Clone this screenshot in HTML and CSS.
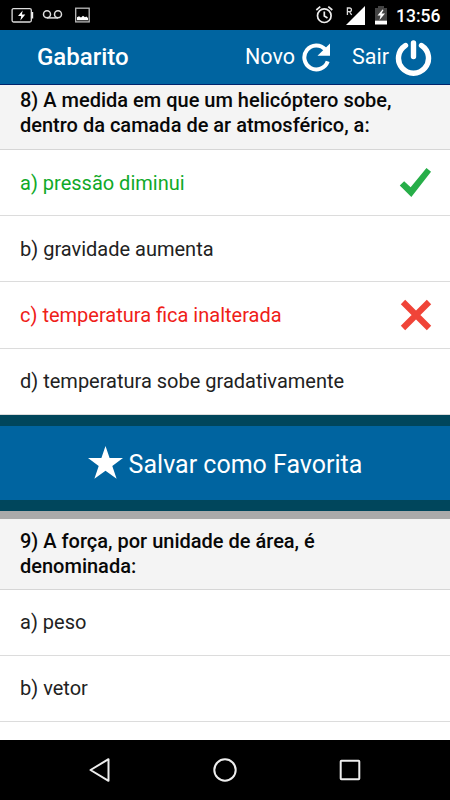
FILE: index.html
```html
<!DOCTYPE html>
<html lang="pt-BR">
<head>
<meta charset="utf-8">
<title>Gabarito</title>
<link rel="stylesheet" href="styles.css">
</head>
<body>
<div class="screen">
  <div class="status">
    <svg class="status-left" width="100" height="30" viewBox="0 0 100 30">
      <rect x="12.1" y="8.600" width="19.200" height="13.400" rx="1.500" fill="none" stroke="#ddd" stroke-width="1.300"/>
      <rect x="31.400" y="12" width="1.800" height="6.500" fill="#eee"/>
      <path d="M22.700 10.500L18 16h3.200l-.8 4.500L25.300 14.600h-3.400z" fill="#fff"/>
      <g fill="none" stroke="#ddd" stroke-width="1.500"><circle cx="47" cy="14.200" r="3.500"/><circle cx="58" cy="14.200" r="3.500"/><path d="M47 17.900h11"/></g>
      <rect x="75.700" y="8.200" width="13.500" height="13.700" fill="none" stroke="#bbb" stroke-width="1.300"/>
      <path d="M77 20.300v-3l2-1 2 1.200 2-1.800 2 1.500 1.300-.7 1.700 1.500v2.300z" fill="#fff"/>
    </svg>
    <svg class="status-right" width="80" height="30" viewBox="312 0 80 30">
      <g fill="none" stroke="#eee" stroke-width="1.700"><circle cx="324.300" cy="15.700" r="6.800"/><path d="M324.300 11.500v4.500l3.200 2M316.300 10l4-3.300M328.300 6.700l4 3.300"/></g>
      <path d="M365 6v19h-19z" fill="#fff"/>
      <path d="M347.400 15V8h2.200a1.800 1.800 0 0 1 0 3.700h-2.200m2.200 0l2 3.300" fill="none" stroke="#ddd" stroke-width="1.300"/>
      <path d="M378 6h6v2h3v12h-12V8h3z" fill="#444"/>
      <path d="M375 20.500h12v4h-12z" fill="#fff"/>
      <path d="M382.500 9.500l-5 6h3l-1 4.500 5.500-6.500h-3.500l2-3.500z" fill="#fff"/>
    </svg>
    <span class="clock">13:56</span>
  </div>
  <header class="header">
    <h1 class="title">Gabarito</h1>
    <span class="action action-new">Novo</span>
    <svg class="refresh" width="30" height="30" viewBox="0 0 30 30"><path d="M24.300 7.400A12 12 0 1 0 26.700 19.300" fill="none" stroke="#fff" stroke-width="4"/><path d="M29 1.500v12.200H16.500z" fill="#fff"/></svg>
    <span class="action action-exit">Sair</span>
    <svg class="power" width="37" height="37" viewBox="0 0 37 37"><path d="M10.500 6.500A15 15 0 1 0 26.500 6.500M18.500 4v13.500" fill="none" stroke="#fff" stroke-width="5.400" stroke-linecap="round"/></svg>
  </header>
  <main class="content">
    <h2 class="question question-first">8) A medida em que um helicóptero sobe,<br>dentro da camada de ar atmosférico, a:</h2>
    <div class="answer correct"><span>a) pressão diminui</span>
      <svg class="mark" width="33" height="32" viewBox="0 0 34 32"><path d="M0.800 18.500L5.300 14.300 12 20.500 28.300 0.500 33 4.300 12.700 30.500z" fill="#27ae49"/></svg>
    </div>
    <div class="answer"><span>b) gravidade aumenta</span></div>
    <div class="answer wrong"><span>c) temperatura fica inalterada</span>
      <svg class="mark" width="32" height="32" viewBox="0 0 32 32"><path d="M3 3L29 29M29 3L3 29" stroke="#f04438" stroke-width="6.200"/></svg>
    </div>
    <div class="answer answer-last"><span>d) temperatura sobe gradativamente</span></div>
    <div class="favorite">
      <svg width="35" height="33" viewBox="0 0 35 33"><path d="M17.500 0L21.600 12H35L24.300 20 28.600 32.800 17.500 24.800 6.400 32.800 10.700 20 0 12H13.400z" fill="#fff"/></svg>
      <span class="favorite-label">Salvar como Favorita</span>
    </div>
    <h2 class="question question-next">9) A força, por unidade de área, é<br>denominada:</h2>
    <div class="answer"><span>a) peso</span></div>
    <div class="answer"><span>b) vetor</span></div>
  </main>
  <nav class="nav">
    <svg width="22" height="26" viewBox="0 0 22 26"><path d="M19.500 2.200v21.600L1.500 13z" fill="none" stroke="#eee" stroke-width="2" stroke-linejoin="round"/></svg>
    <svg width="26" height="26" viewBox="0 0 26 26"><circle cx="13" cy="13" r="10.700" fill="none" stroke="#eee" stroke-width="2"/></svg>
    <svg width="22" height="26" viewBox="0 0 22 26"><rect x="1.700" y="3.700" width="18.600" height="18.600" rx=".7" fill="none" stroke="#eee" stroke-width="2"/></svg>
  </nav>
</div>
</body>
</html>
```
FILE: styles.css
```css
* { box-sizing: border-box; }
body { margin: 0; font-family: Roboto, sans-serif; background: #000; }
svg { display: block; flex: none; }
.screen { width: 450px; height: 800px; display: flex; flex-direction: column; overflow: hidden; }
.status { height: 30px; flex: none; display: flex; align-items: center; background: #000; color: #fff; }
.status-left { margin-right: 212px; }
.clock { margin-left: 4px; font-size: 17.5px; font-weight: 500; line-height: 30px; padding-top: 2px; }
.header { height: 55px; flex: none; display: flex; align-items: center; background: #0064a0; border-bottom: 1px solid #00246c; color: #fff; }
.title { margin: 0 0 0 37px; width: 208px; font-size: 24px; font-weight: 500; line-height: 54px; }
.action { font-size: 21.5px; line-height: 54px; white-space: nowrap; }
.action-new { width: 56px; }
.action-exit { width: 38px; margin-left: 21px; }
.power { margin-left: 5px; }
.content { flex: 1; min-height: 0; overflow: hidden; background: #fff; }
.question { margin: 0; padding-left: 20px; background: #f4f4f4; border-bottom: 1px solid #d6d6d6; color: #080808; font-size: 20px; font-weight: 500; line-height: 25px; white-space: nowrap; }
.question-first { height: 65px; padding-top: 3px; }
.question-next { height: 79px; padding-top: 10px; border-top: 8px solid #aaa; }
.answer { height: 66.2px; padding: 0 18px 0 20px; display: flex; align-items: center; justify-content: space-between; border-bottom: 1px solid #dcdcdc; color: #222; font-size: 20px; white-space: nowrap; }
.correct { color: #10a928; }
.wrong { color: #ef2018; }
.answer-last { height: 66px; }
.favorite { height: 96px; display: flex; align-items: center; justify-content: center; gap: 6px; background: #0064a0; border-top: 11px solid #00465c; border-bottom: 11px solid #00465c; color: #fff; font-size: 25px; }
.favorite-label { padding-top: 3px; }
.nav { height: 60px; flex: none; display: flex; align-items: center; justify-content: space-between; padding: 0 89px; background: #000; }
```
